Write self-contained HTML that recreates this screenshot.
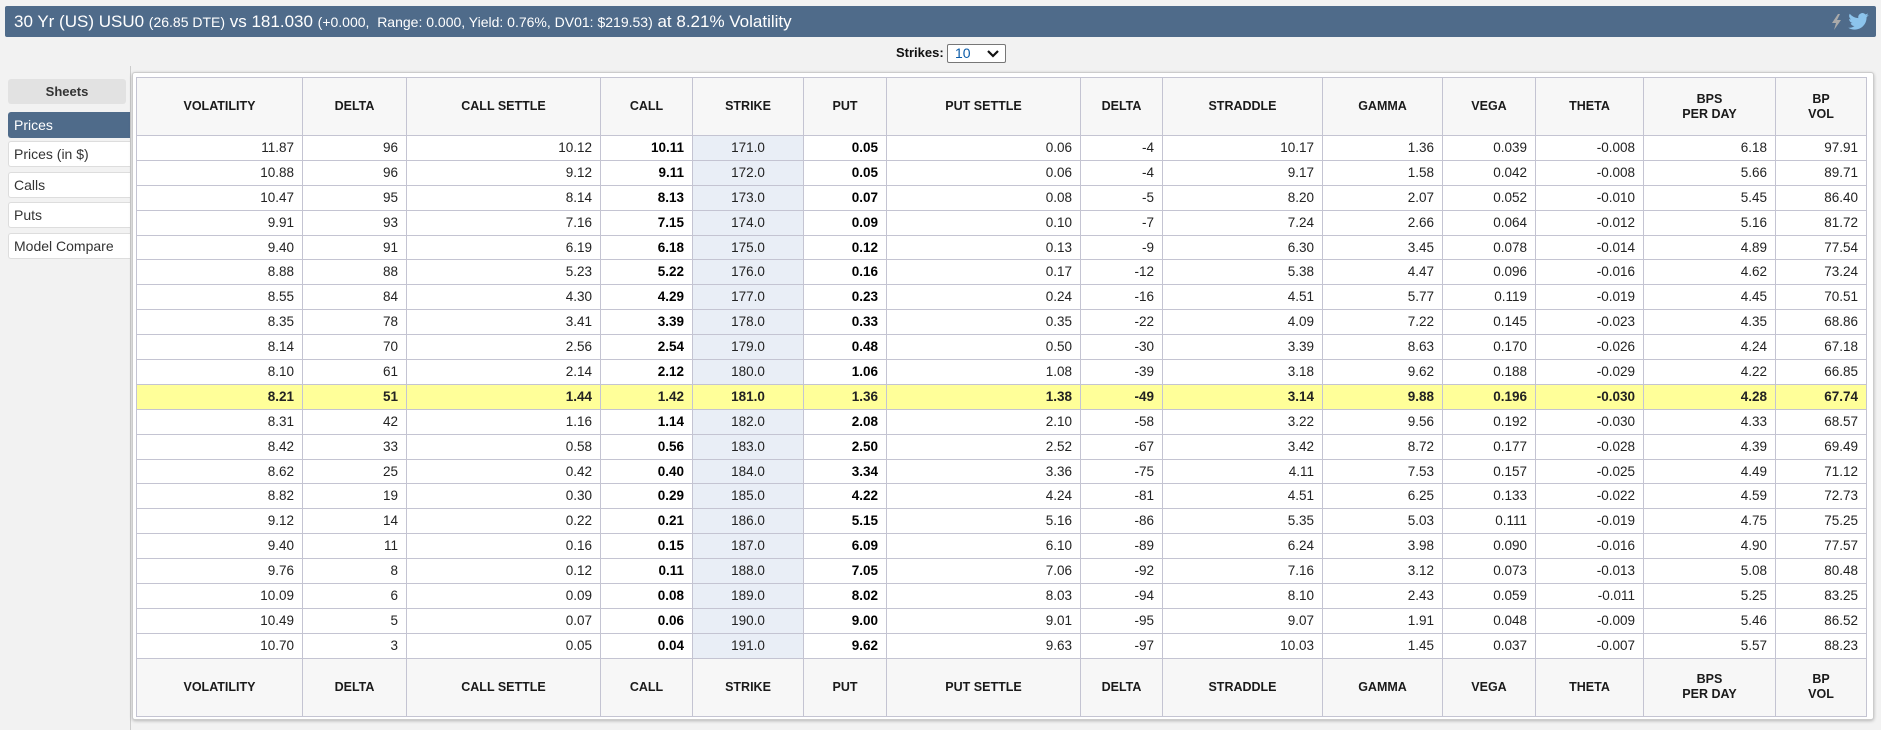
<!DOCTYPE html>
<html><head><meta charset="utf-8">
<style>
*{box-sizing:border-box;margin:0;padding:0}
body{width:1881px;height:730px;background:#f2f2f2;font-family:"Liberation Sans",Arial,sans-serif;position:relative;overflow:hidden;color:#111}
.bar{position:absolute;left:5px;top:6px;width:1871px;height:31px;background:#4f6b8a;border-radius:2px;color:#fff;font-size:17px;line-height:31px;padding-left:9px}
.bar small{font-size:14px}
.strikes{position:absolute;left:896px;top:44px;font-size:13px;font-weight:bold;line-height:18px}
.sel{position:absolute;left:947px;top:44px;width:59px;height:19px;border:1px solid #777;background:#fff;border-radius:2px;font-size:14px;color:#0a5ba8;padding-left:7px;line-height:17px}
.sel svg{position:absolute;right:6px;top:5px}
.side{position:absolute;left:130px;top:66px;width:1px;height:664px;background:#ccc}
.sheets{position:absolute;left:8px;top:79px;width:118px;height:25px;background:#e2e2e2;border-radius:3px;font-size:13px;font-weight:bold;text-align:center;line-height:25px;color:#333}
.item{position:absolute;left:8px;width:122px;height:26px;background:#fff;border:1px solid #ddd;border-right:none;font-size:14px;line-height:24px;padding-left:5px;color:#333;border-radius:3px 0 0 3px}
.item.act{background:#4f6b8a;color:#fff;border-color:#4f6b8a}
.wrap{position:absolute;left:132px;top:72px;width:1742px;height:648px;border:1px solid #ccc;background:#fff;box-shadow:0 1px 3px rgba(0,0,0,.25);border-radius:3px}
table{position:absolute;left:136px;top:77px;border-collapse:collapse;table-layout:fixed;width:1730px}
td,th{border:1px solid #c4c4d2;font-size:13.5px}
th{background:#f7f7f7;font-size:12.5px;font-weight:bold;height:58px;color:#1a1a1a;line-height:15px}
td{height:24.9px;line-height:20px;text-align:right;padding:0 8px 0 0;color:#222}
td.b{font-weight:bold;color:#000}
td.s{background:#e9eef6;text-align:center;padding:0}
tr.hl td{background:#ffff99;font-weight:bold}
</style></head><body>
<div class="bar">30 Yr (US) USU0 <small>(26.85 DTE)</small> vs 181.030 <small>(+0.000, &nbsp;Range: 0.000, Yield: 0.76%, DV01: $219.53)</small> at 8.21% Volatility
<svg style="position:absolute;right:34px;top:8px" width="12" height="16" viewBox="0 0 12 16"><path d="M8 0L2 9h4l-2 7 7-10H7l3-6z" fill="#aaa"/></svg>
<svg style="position:absolute;right:7px;top:7px" width="21" height="17" viewBox="0 0 24 20"><path d="M24 2.4a10 10 0 0 1-2.8.8A4.9 4.9 0 0 0 23.3.5a9.8 9.8 0 0 1-3.1 1.2A4.9 4.9 0 0 0 11.8 6 14 14 0 0 1 1.7.9a4.9 4.9 0 0 0 1.5 6.6A4.9 4.9 0 0 1 1 6.9v.1a4.9 4.9 0 0 0 3.9 4.8 4.9 4.9 0 0 1-2.2.1 4.9 4.9 0 0 0 4.6 3.4A9.9 9.9 0 0 1 0 17.3 14 14 0 0 0 7.5 19.5c9 0 14-7.5 14-14v-.6A10 10 0 0 0 24 2.4z" fill="#8cc4ec"/></svg>
</div>
<div class="strikes">Strikes:</div>
<div class="sel">10<svg width="12" height="8" viewBox="0 0 12 8"><path d="M1 1l5 5 5-5" stroke="#111" stroke-width="2.2" fill="none"/></svg></div>
<div class="side"></div>
<div class="sheets">Sheets</div>
<div class="item act" style="top:112px">Prices</div>
<div class="item" style="top:141px">Prices (in $)</div>
<div class="item" style="top:172px">Calls</div>
<div class="item" style="top:202px">Puts</div>
<div class="item" style="top:233px">Model Compare</div>
<div class="wrap"></div>
<table>
<colgroup><col style="width:166px"><col style="width:104px"><col style="width:194px"><col style="width:92px"><col style="width:111px"><col style="width:83px"><col style="width:194px"><col style="width:82px"><col style="width:160px"><col style="width:120px"><col style="width:93px"><col style="width:108px"><col style="width:132px"><col style="width:91px"></colgroup>
<tr><th>VOLATILITY</th><th>DELTA</th><th>CALL SETTLE</th><th>CALL</th><th>STRIKE</th><th>PUT</th><th>PUT SETTLE</th><th>DELTA</th><th>STRADDLE</th><th>GAMMA</th><th>VEGA</th><th>THETA</th><th>BPS<br>PER DAY</th><th>BP<br>VOL</th></tr>
<tr><td>11.87</td><td>96</td><td>10.12</td><td class="b">10.11</td><td class="s">171.0</td><td class="b">0.05</td><td>0.06</td><td>-4</td><td>10.17</td><td>1.36</td><td>0.039</td><td>-0.008</td><td>6.18</td><td>97.91</td></tr>
<tr><td>10.88</td><td>96</td><td>9.12</td><td class="b">9.11</td><td class="s">172.0</td><td class="b">0.05</td><td>0.06</td><td>-4</td><td>9.17</td><td>1.58</td><td>0.042</td><td>-0.008</td><td>5.66</td><td>89.71</td></tr>
<tr><td>10.47</td><td>95</td><td>8.14</td><td class="b">8.13</td><td class="s">173.0</td><td class="b">0.07</td><td>0.08</td><td>-5</td><td>8.20</td><td>2.07</td><td>0.052</td><td>-0.010</td><td>5.45</td><td>86.40</td></tr>
<tr><td>9.91</td><td>93</td><td>7.16</td><td class="b">7.15</td><td class="s">174.0</td><td class="b">0.09</td><td>0.10</td><td>-7</td><td>7.24</td><td>2.66</td><td>0.064</td><td>-0.012</td><td>5.16</td><td>81.72</td></tr>
<tr><td>9.40</td><td>91</td><td>6.19</td><td class="b">6.18</td><td class="s">175.0</td><td class="b">0.12</td><td>0.13</td><td>-9</td><td>6.30</td><td>3.45</td><td>0.078</td><td>-0.014</td><td>4.89</td><td>77.54</td></tr>
<tr><td>8.88</td><td>88</td><td>5.23</td><td class="b">5.22</td><td class="s">176.0</td><td class="b">0.16</td><td>0.17</td><td>-12</td><td>5.38</td><td>4.47</td><td>0.096</td><td>-0.016</td><td>4.62</td><td>73.24</td></tr>
<tr><td>8.55</td><td>84</td><td>4.30</td><td class="b">4.29</td><td class="s">177.0</td><td class="b">0.23</td><td>0.24</td><td>-16</td><td>4.51</td><td>5.77</td><td>0.119</td><td>-0.019</td><td>4.45</td><td>70.51</td></tr>
<tr><td>8.35</td><td>78</td><td>3.41</td><td class="b">3.39</td><td class="s">178.0</td><td class="b">0.33</td><td>0.35</td><td>-22</td><td>4.09</td><td>7.22</td><td>0.145</td><td>-0.023</td><td>4.35</td><td>68.86</td></tr>
<tr><td>8.14</td><td>70</td><td>2.56</td><td class="b">2.54</td><td class="s">179.0</td><td class="b">0.48</td><td>0.50</td><td>-30</td><td>3.39</td><td>8.63</td><td>0.170</td><td>-0.026</td><td>4.24</td><td>67.18</td></tr>
<tr><td>8.10</td><td>61</td><td>2.14</td><td class="b">2.12</td><td class="s">180.0</td><td class="b">1.06</td><td>1.08</td><td>-39</td><td>3.18</td><td>9.62</td><td>0.188</td><td>-0.029</td><td>4.22</td><td>66.85</td></tr>
<tr class="hl"><td>8.21</td><td>51</td><td>1.44</td><td>1.42</td><td class="s">181.0</td><td>1.36</td><td>1.38</td><td>-49</td><td>3.14</td><td>9.88</td><td>0.196</td><td>-0.030</td><td>4.28</td><td>67.74</td></tr>
<tr><td>8.31</td><td>42</td><td>1.16</td><td class="b">1.14</td><td class="s">182.0</td><td class="b">2.08</td><td>2.10</td><td>-58</td><td>3.22</td><td>9.56</td><td>0.192</td><td>-0.030</td><td>4.33</td><td>68.57</td></tr>
<tr><td>8.42</td><td>33</td><td>0.58</td><td class="b">0.56</td><td class="s">183.0</td><td class="b">2.50</td><td>2.52</td><td>-67</td><td>3.42</td><td>8.72</td><td>0.177</td><td>-0.028</td><td>4.39</td><td>69.49</td></tr>
<tr><td>8.62</td><td>25</td><td>0.42</td><td class="b">0.40</td><td class="s">184.0</td><td class="b">3.34</td><td>3.36</td><td>-75</td><td>4.11</td><td>7.53</td><td>0.157</td><td>-0.025</td><td>4.49</td><td>71.12</td></tr>
<tr><td>8.82</td><td>19</td><td>0.30</td><td class="b">0.29</td><td class="s">185.0</td><td class="b">4.22</td><td>4.24</td><td>-81</td><td>4.51</td><td>6.25</td><td>0.133</td><td>-0.022</td><td>4.59</td><td>72.73</td></tr>
<tr><td>9.12</td><td>14</td><td>0.22</td><td class="b">0.21</td><td class="s">186.0</td><td class="b">5.15</td><td>5.16</td><td>-86</td><td>5.35</td><td>5.03</td><td>0.111</td><td>-0.019</td><td>4.75</td><td>75.25</td></tr>
<tr><td>9.40</td><td>11</td><td>0.16</td><td class="b">0.15</td><td class="s">187.0</td><td class="b">6.09</td><td>6.10</td><td>-89</td><td>6.24</td><td>3.98</td><td>0.090</td><td>-0.016</td><td>4.90</td><td>77.57</td></tr>
<tr><td>9.76</td><td>8</td><td>0.12</td><td class="b">0.11</td><td class="s">188.0</td><td class="b">7.05</td><td>7.06</td><td>-92</td><td>7.16</td><td>3.12</td><td>0.073</td><td>-0.013</td><td>5.08</td><td>80.48</td></tr>
<tr><td>10.09</td><td>6</td><td>0.09</td><td class="b">0.08</td><td class="s">189.0</td><td class="b">8.02</td><td>8.03</td><td>-94</td><td>8.10</td><td>2.43</td><td>0.059</td><td>-0.011</td><td>5.25</td><td>83.25</td></tr>
<tr><td>10.49</td><td>5</td><td>0.07</td><td class="b">0.06</td><td class="s">190.0</td><td class="b">9.00</td><td>9.01</td><td>-95</td><td>9.07</td><td>1.91</td><td>0.048</td><td>-0.009</td><td>5.46</td><td>86.52</td></tr>
<tr><td>10.70</td><td>3</td><td>0.05</td><td class="b">0.04</td><td class="s">191.0</td><td class="b">9.62</td><td>9.63</td><td>-97</td><td>10.03</td><td>1.45</td><td>0.037</td><td>-0.007</td><td>5.57</td><td>88.23</td></tr>
<tr><th>VOLATILITY</th><th>DELTA</th><th>CALL SETTLE</th><th>CALL</th><th>STRIKE</th><th>PUT</th><th>PUT SETTLE</th><th>DELTA</th><th>STRADDLE</th><th>GAMMA</th><th>VEGA</th><th>THETA</th><th>BPS<br>PER DAY</th><th>BP<br>VOL</th></tr>
</table>
</body></html>
